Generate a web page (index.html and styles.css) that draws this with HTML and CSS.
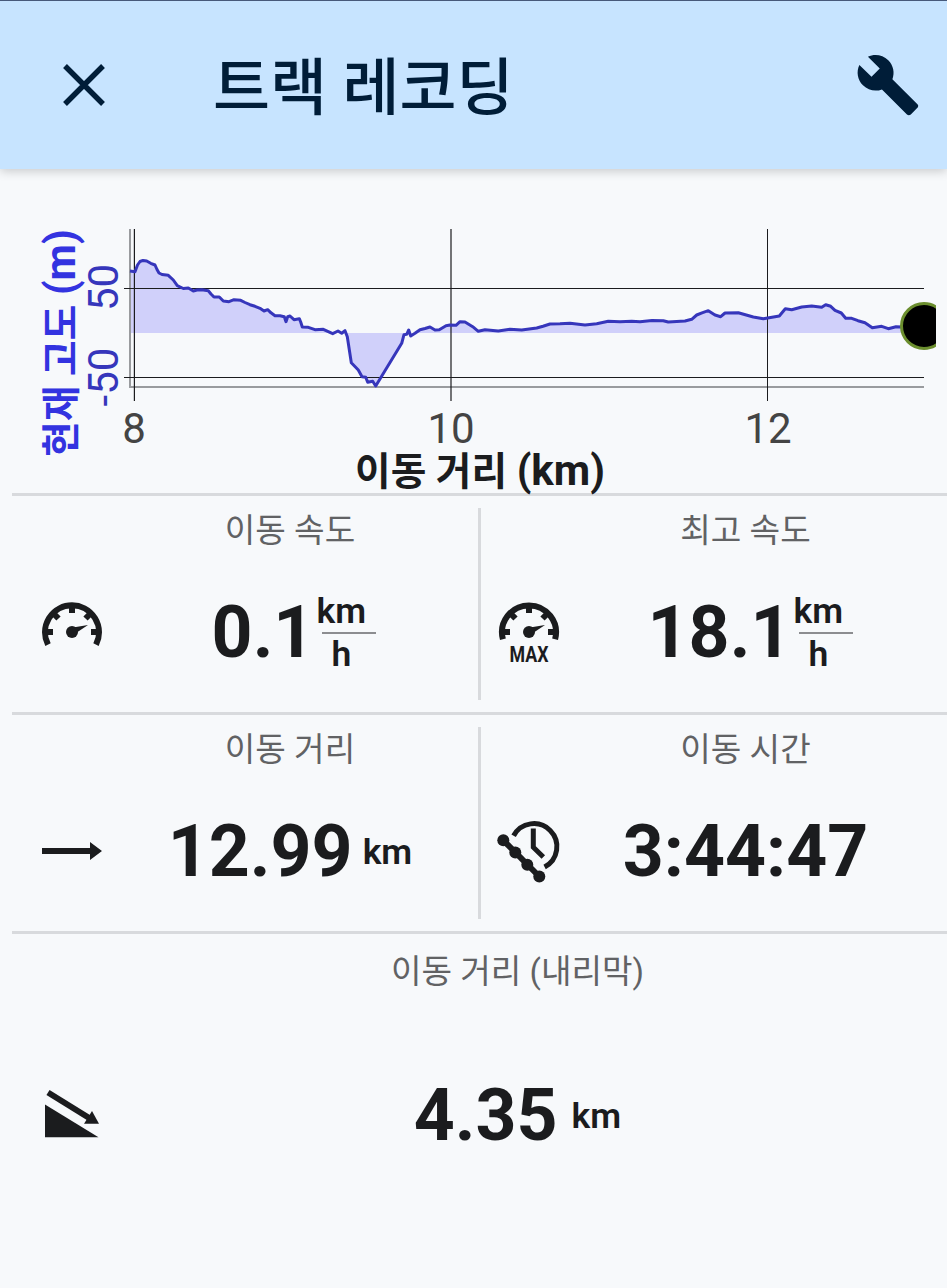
FILE: index.html
```
<!DOCTYPE html>
<html lang="ko">
<head>
    <meta charset="UTF-8">
    <meta name="viewport" content="width=device-width, initial-scale=1.0">
    <title>트랙 레코딩</title>
    <link rel="stylesheet" href="styles.css">
</head>
<body>

    <header class="topbar">
        <button class="icon-btn" aria-label="닫기">
            <svg width="42" height="42" viewBox="0 0 42 42">
                <path d="M2 2L40 40M40 2L2 40" stroke="currentColor" stroke-width="5.4" fill="none"/>
            </svg>
        </button>
        <h1>트랙 레코딩</h1>
        <button class="icon-btn" aria-label="설정">
            <svg width="66" height="66" viewBox="0 0 24 24">
                <path fill="currentColor" d="M22.7 19l-9.1-9.1c.9-2.3.4-5-1.5-6.9-2-2-5-2.4-7.4-1.3L9 6 6 9 1.6 4.7C.4 7.1.9 10.1 2.9 12.1c1.9 1.9 4.6 2.4 6.9 1.5l9.1 9.1c.4.4 1 .4 1.4 0l2.3-2.3c.5-.4.5-1.1.1-1.4z"/>
            </svg>
        </button>
    </header>

    <main>
        <section class="chart">
            <svg width="947" height="324" viewBox="0 169 947 324">
                <defs>
                    <clipPath id="plot"><rect x="0" y="169" width="936" height="324"/></clipPath>
                </defs>

                <path class="area" d="M130 333V271L135 271.7L140 260.7L146.7 261L150.7 263.3L155 265L159 273.3L168.3 275.3L173.3 280L177.3 285.7L183.3 288.5L188.3 288L193.3 291L201.7 289.7L208.3 290.7L214 297L219.3 297L223.3 301L229 301.7L234 299.7L240.7 300.3L250 304.7L260 308.3L264 311L267.7 309.7L275 315.7L284.3 316.7L286 321.7L287.7 316.7L290 316L294 319.7L299.3 318.7L302.3 327L308.3 327.3L315 329.7L323.3 329.3L332.7 333.7L338 331L341.7 333.3L345 330.7L347.3 336.7L351.3 362.7L358.3 370L362 376.7L365.7 377.3L367.7 382.3L372.7 381.3L375.7 386L401.7 343.3L404 334.7L406.7 334.3L408.7 330L410.7 336L415 333.3L420 329.7L430 327L435 330L439.3 329.7L446 325.7L456 325.3L460 321.7L465 322L472.7 326.7L478.3 331.3L485 329.7L498.3 331L510 329.3L521.7 330L536.7 328L550 324L570 323.3L585 325L596.7 323.7L608.3 321.3L631.7 321.3L640 321.7L663.3 320.7L668.3 322L685 321L691.7 319.3L696.7 315L708.3 310.7L715 315L720.7 316.7L725 313L738.3 312.7L753.3 317L763.3 318.7L779.3 316L785.3 308.7L791.7 309.7L801.7 307L811.7 306L821.7 307.3L825.7 304.7L830.7 306.3L835 310.3L841.3 313L845.7 318.3L851.7 318.3L865 322.7L872.3 327.7L881.7 326.3L888.3 328.7L896 326.7L902 327L924 327V333Z"/>

                <!-- axes and grid -->
                <path class="axis" d="M130 229V387H924"/>
                <path class="grid" d="M124 288.5H924M124 377.5H924M767.5 229V401"/>
                <path class="grid soft" d="M134.4 229V401M451 229V401"/>

                <path class="line" d="M130 271L135 271.7L137.5 265L140 261.5L143 260.4L146.7 261L150.7 263.3L155 265L157 269.5L159 273L162 274.5L168.3 275.3L173.3 280L177.3 285.7L183.3 288.5L188.3 288L193.3 291L197 290L201.7 289.7L208.3 290.7L211 294L214 297L219.3 297L223.3 301L229 301.7L234 299.7L240.7 300.3L245 302.5L250 304.7L255 306.3L260 308.3L264 311L267.7 309.7L271 312.8L275 315.7L280 315.8L284.3 316.7L286 321.7L287.7 316.7L290 316L294 319.7L299.3 318.7L300.7 322L302.3 327L308.3 327.3L315 329.7L323.3 329.3L332.7 333.7L338 331L341.7 333.3L345 330.7L347.3 336.7L351.3 362.7L358.3 370L362 376.7L365.7 377.3L367.7 382.3L372.7 381.3L375.7 386L401.7 343.3L404 334.7L406.7 334.3L408.7 330L410.7 336L415 333.3L420 329.7L425 328.5L430 327L435 330L439.3 329.7L446 325.7L450 325L456 325.3L460 321.7L465 322L472.7 326.7L478.3 331.3L485 329.7L498.3 331L510 329.3L521.7 330L536.7 328L543 326.2L550 324L560 323.8L570 323.3L585 325L596.7 323.7L608.3 321.3L620 321.8L631.7 321.3L640 321.7L652 320.6L663.3 320.7L668.3 322L685 321L691.7 319.3L696.7 315L702 312.8L708.3 310.7L715 315L720.7 316.7L725 313L738.3 312.7L753.3 317L763.3 318.7L779.3 316L785.3 308.7L791.7 309.7L801.7 307L811.7 306L821.7 307.3L825.7 304.7L830.7 306.3L835 310.3L841.3 313L845.7 318.3L851.7 318.3L858 320.7L865 322.7L872.3 327.7L881.7 326.3L888.3 328.7L896 326.7L902 327L924 327"/>
                <circle class="marker" cx="924" cy="326" r="22.5" clip-path="url(#plot)"/>

                <text class="tick y" transform="translate(118 287.5) rotate(-90)">50</text>
                <text class="tick y" transform="translate(118 377) rotate(-90)">-50</text>
                <text class="tick" x="134" y="443">8</text>
                <text class="tick" x="451" y="443">10</text>
                <text class="tick" x="768" y="443">12</text>
                <text class="axis-title y" transform="translate(75 343) rotate(-90)">현재 고도 <tspan class="axis-unit">(m)</tspan></text>
                <text class="axis-title" x="480" y="485">이동 거리 <tspan class="axis-unit">(km)</tspan></text>
            </svg>
        </section>

        <div class="row">
            <section class="cell">
                <h2>이동 속도</h2>
                <svg class="icon" width="60" height="60" viewBox="-30 -30 60 60">
                    <path class="stroke" d="M-24 12.7A27 27 0 1 1 24 12.7"/>
                    <path class="stroke" d="M-28 0H-19M28 0H19M0 -28V-19M-18 -18L-13.5 -13.5M18 -18L13.5 -13.5"/>
                    <circle r="6"/>
                    <path d="M0 -5L4 -5L16 -7L5.5 0L2 5Z"/>
                </svg>
                <div class="value speed">0.1<span class="fraction"><span>km</span><span>h</span></span></div>
            </section>
            <section class="cell">
                <h2>최고 속도</h2>
                <svg class="icon" width="60" height="60" viewBox="-30 -30 60 60">
                    <path class="stroke" d="M-26.1 7.3A27 27 0 1 1 26.1 7.3"/>
                    <path class="stroke" d="M-28 0H-19M28 0H19M0 -28V-19M-18 -18L-13.5 -13.5M18 -18L13.5 -13.5"/>
                    <circle r="6"/>
                    <path d="M0 -5L4 -5L16 -7L5.5 0L2 5Z"/>
                    <text class="max" x="-19.5" y="30" textLength="39" lengthAdjust="spacingAndGlyphs">MAX</text>
                </svg>
                <div class="value speed">18.1<span class="fraction"><span>km</span><span>h</span></span></div>
            </section>
        </div>

        <div class="row">
            <section class="cell">
                <h2>이동 거리</h2>
                <svg class="icon" width="60" height="60" viewBox="0 0 60 60">
                    <path d="M0 27H48V21L60 30L48 39V33H0Z"/>
                </svg>
                <div class="value">12.99<span class="unit">km</span></div>
            </section>
            <section class="cell">
                <h2>이동 시간</h2>
                <svg class="icon" width="60" height="60" viewBox="0 0 60 60">
                    <path class="stroke thin" d="M14.6 14.8A23 23 0 1 1 45.6 46"/>
                    <path class="stroke thin" d="M34.3 7.5V26.2L44.3 36"/>
                    <path class="stroke link" d="M4.3 19.3L40.3 55.5"/>
                    <circle cx="4.3" cy="19.3" r="6"/>
                    <circle cx="16.3" cy="31.5" r="6"/>
                    <circle cx="28.3" cy="43.7" r="6"/>
                    <circle cx="40.3" cy="55.5" r="6"/>
                </svg>
                <div class="value">3:44:47</div>
            </section>
        </div>

        <div class="row last">
            <section class="cell">
                <h2>이동 거리 (내리막)</h2>
                <svg class="icon" width="60" height="60" viewBox="0 0 60 60">
                    <path d="M3 20.5V53.3H56.5Z"/>
                    <path class="stroke" d="M6 8.5L48 34.5"/>
                    <path d="M50 27L57 39.8H42Z"/>
                </svg>
                <div class="value">4.35<span class="unit">km</span></div>
            </section>
        </div>
    </main>

</body>
</html>
```
FILE: styles.css
```
* {
    box-sizing: border-box;
}
body {
    margin: 0;
    height: 1288px;
    overflow: hidden;
    background: #f7f9fb;
    color: #1b1c1e;
    font-family: Roboto, "Noto Sans CJK KR", sans-serif;
}
.topbar {
    display: flex;
    align-items: center;
    height: 169px;
    padding: 0 26px 1px 63px;
    border-top: 1px solid #47597a;
    background: #c7e4ff;
    color: #001d38;
    box-shadow: 0 2px 10px rgba(0, 0, 0, 0.2);
}
.topbar h1 {
    flex: 1;
    margin: 0 0 0 108px;
    padding-top: 9px;
    font-size: 62px;
    font-weight: 500;
    line-height: 80px;
}
.icon-btn {
    display: flex;
    padding: 0;
    border: none;
    background: none;
    color: inherit;
}
.chart svg {
    display: block;
    overflow: visible;
}
.area {
    fill: #d0d0fa;
}
.line {
    fill: none;
    stroke: #3636bb;
    stroke-width: 3;
    stroke-linejoin: round;
}
.axis {
    fill: none;
    stroke: #999b9e;
    stroke-width: 2;
}
.grid {
    fill: none;
    stroke: #1b1c1e;
    stroke-width: 1;
}
.grid.soft {
    stroke-width: 1.2;
}
.marker {
    fill: #000;
    stroke: #6b8e2e;
    stroke-width: 3;
}
.tick {
    fill: #444;
    font-size: 42px;
    text-anchor: middle;
}
.tick.y {
    fill: #3636bb;
}
.axis-title {
    fill: #1b1c1e;
    font-size: 38.7px;
    font-weight: 700;
    text-anchor: middle;
}
.axis-title.y {
    fill: #3333e0;
}
.axis-unit {
    font-size: 42px;
}
.row {
    display: grid;
    grid-template-columns: 466px 1fr;
    height: 219px;
    margin-left: 12px;
    border-top: 3px solid #d8dadd;
}
.cell {
    display: grid;
    grid-template-columns: 60px 1fr;
    grid-template-rows: 66px 140px;
    align-items: center;
    padding-left: 30px;
}
.cell + .cell {
    height: 192px;
    margin-top: 12px;
    padding: 0 15px 0 18px;
    border-left: 3px solid #d8dadd;
    grid-template-rows: 42px 164px;
}
.cell h2 {
    grid-column: 2;
    margin: 0;
    padding-top: 3px;
    color: #616264;
    font-size: 33.2px;
    font-weight: 400;
    line-height: 39px;
    text-align: center;
}
.icon {
    overflow: visible;
    fill: #1b1c1e;
}
.stroke {
    fill: none;
    stroke: #1b1c1e;
    stroke-width: 6;
}
.stroke.thin {
    stroke-width: 5;
}
.stroke.link {
    stroke-width: 6;
}
.max {
    font-size: 21.5px;
    font-weight: 700;
}
.value {
    display: flex;
    align-items: center;
    justify-content: center;
    padding-top: 2px;
    font-size: 71.5px;
    font-weight: 700;
    line-height: 84px;
}
.speed {
    padding: 1px 0 0 8px;
}
.cell + .cell .speed {
    padding-left: 10px;
}
.unit {
    margin-left: 10px;
    font-size: 35.5px;
    font-weight: 600;
    line-height: 42px;
}
.fraction {
    display: flex;
    flex-direction: column;
    font-size: 35.5px;
    font-weight: 600;
    line-height: 41px;
    text-align: center;
}
.fraction span:first-child {
    padding-right: 8px;
}
.fraction span:last-child {
    width: 54px;
    margin-left: 8px;
    padding-right: 16px;
    border-top: 2px solid #8c8d90;
}
.last {
    grid-template-columns: 1fr;
    height: 357px;
}
.last .cell {
    grid-template-rows: 72px 216px;
    padding-right: 14px;
}
.last .value {
    padding-top: 4px;
}
.last .unit {
    margin-left: 14px;
}
```
